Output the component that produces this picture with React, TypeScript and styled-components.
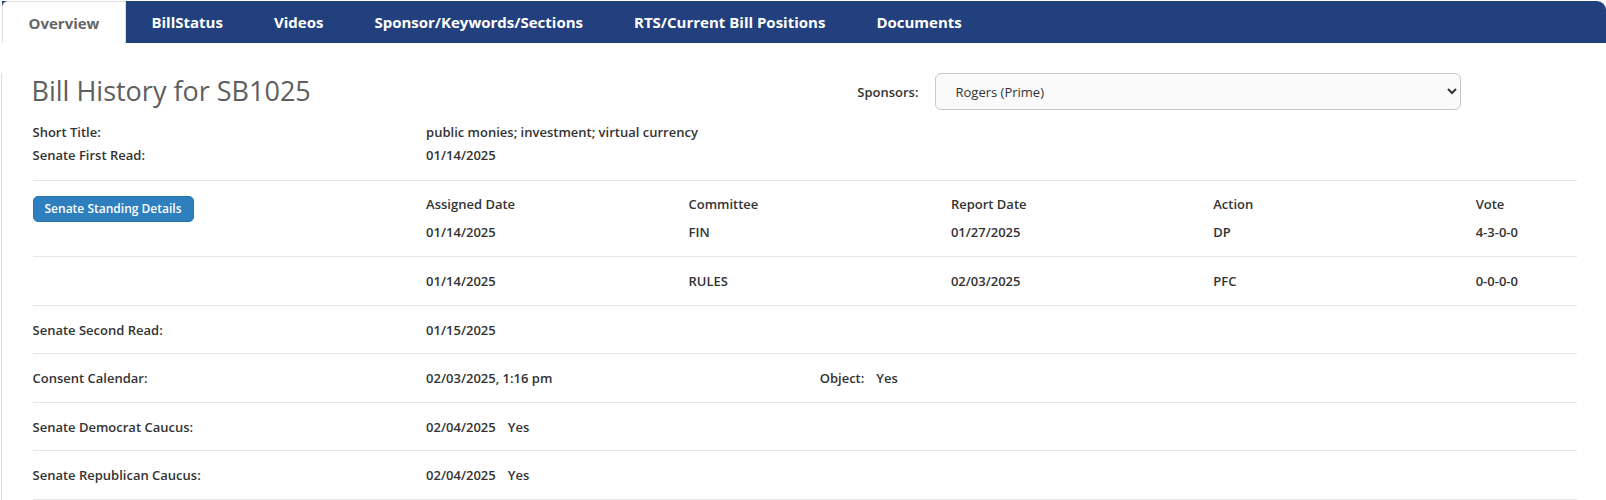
import React from "react";
import styled, { createGlobalStyle } from "styled-components";

const Global = createGlobalStyle`
  html, body { margin: 0; padding: 0; background: #fff; }
  body { font-family: "Open Sans", "Liberation Sans", sans-serif; color: #333; }
  * { box-sizing: border-box; }
`;

const Page = styled.div`
  width: 1606px;
  padding-top: 1px;
`;

const TabBar = styled.nav`
  display: flex;
  align-items: stretch;
  margin-left: 2px;
  height: 42px;
  background: #22407e;
  border-top-right-radius: 9px;
`;

const Tab = styled.a<{ $active?: boolean }>`
  display: flex;
  align-items: center;
  padding: 0 ${(p) => (p.$active ? "25.5px" : "25.5px")};
  font-size: 15px;
  font-weight: 700;
  text-decoration: none;
  color: ${(p) => (p.$active ? "#666" : "#fff")};
  background: ${(p) => (p.$active ? "#fff" : "transparent")};
  border: ${(p) => (p.$active ? "1px solid #ddd" : "none")};
  border-bottom: none;
  border-top-left-radius: ${(p) => (p.$active ? "6px" : "0")};
  cursor: pointer;
`;

const Panel = styled.div`
  border-left: 1px solid #ddd;
  margin-left: 1px;
  width: 1576px;
  padding-left: 30.5px;
`;

const Header = styled.div`
  display: grid;
  grid-template-columns: 802px 100px 526px;
  align-items: center;
  margin-top: 30px;
  height: 37px;
`;

const Title = styled.h1`
  margin: 0;
  font-size: 27px;
  font-weight: 400;
  color: #5e5e5e;
  line-height: 37px;
  position: relative;
  top: -1px;
  left: -1px;
`;

const SponsorLabel = styled.label`
  font-size: 13px;
  font-weight: 600;
  text-align: right;
  padding-right: 16px;
`;

const Select = styled.select`
  height: 37px;
  width: 526px;
  border: 1px solid #c8c8c8;
  border-radius: 6px;
  background: #fafafa;
  font-family: "Open Sans", "Liberation Sans", sans-serif;
  font-size: 13px;
  font-weight: 400;
  color: #333;
  padding: 0 6px 0 16px;
`;

const InfoBlock = styled.div`
  margin-top: 10.5px;
  padding-bottom: 12.8px;
  border-bottom: 1px solid #e6e6e6;
`;

const InfoLine = styled.div`
  display: grid;
  grid-template-columns: 393.6px 1fr;
  font-size: 13px;
  font-weight: 600;
  line-height: 23.6px;
`;

const Standing = styled.div`
  display: grid;
  grid-template-columns: 393.6px 1fr;
  border-bottom: 1px solid #e6e6e6;
`;

const ButtonCell = styled.div`
  padding-top: 14.4px;
`;

const DetailButton = styled.button`
  height: 26px;
  width: 161px;
  border: 1px solid #2a74ad;
  border-radius: 5px;
  background: #2e7fbe;
  color: #fff;
  font-family: "Open Sans", "Liberation Sans", sans-serif;
  font-size: 12px;
  font-weight: 600;
  padding: 0;
  cursor: pointer;
`;

const CommitteeGrid = styled.div<{ $pad: string }>`
  display: grid;
  grid-template-columns: repeat(4, 262.4px) 1fr;
  row-gap: 7.7px;
  padding: ${(p) => p.$pad};
  font-size: 13px;
  font-weight: 600;
  line-height: 20px;
`;

const Row = styled.div`
  display: grid;
  grid-template-columns: 393.6px 393.6px 1fr;
  align-items: center;
  height: 48.5px;
  border-bottom: 1px solid #e6e6e6;
  font-size: 13px;
  font-weight: 600;
`;

const Extra = styled.span`
  margin-left: 12px;
`;

const ObjectLabel = styled.span`
  margin-right: 12px;
`;

const tabs = [
  "Overview",
  "BillStatus",
  "Videos",
  "Sponsor/Keywords/Sections",
  "RTS/Current Bill Positions",
  "Documents",
];

export default function App() {
  return (
    <>
      <Global />
      <Page>
        <TabBar>
          {tabs.map((t, i) => (
            <Tab key={t} $active={i === 0}>
              {t}
            </Tab>
          ))}
        </TabBar>
        <Panel>
          <Header>
            <Title>Bill History for SB1025</Title>
            <SponsorLabel>Sponsors:</SponsorLabel>
            <Select defaultValue="rogers">
              <option value="rogers">Rogers (Prime)</option>
            </Select>
          </Header>
          <InfoBlock>
            <InfoLine>
              <span>Short Title:</span>
              <span>public monies; investment; virtual currency</span>
            </InfoLine>
            <InfoLine>
              <span>Senate First Read:</span>
              <span>01/14/2025</span>
            </InfoLine>
          </InfoBlock>
          <Standing>
            <ButtonCell>
              <DetailButton>Senate Standing Details</DetailButton>
            </ButtonCell>
            <CommitteeGrid $pad="12.6px 0 14.6px">
              <span>Assigned Date</span>
              <span>Committee</span>
              <span>Report Date</span>
              <span>Action</span>
              <span>Vote</span>
              <span>01/14/2025</span>
              <span>FIN</span>
              <span>01/27/2025</span>
              <span>DP</span>
              <span>4-3-0-0</span>
            </CommitteeGrid>
          </Standing>
          <Standing>
            <span />
            <CommitteeGrid $pad="13.8px 0 13.8px">
              <span>01/14/2025</span>
              <span>RULES</span>
              <span>02/03/2025</span>
              <span>PFC</span>
              <span>0-0-0-0</span>
            </CommitteeGrid>
          </Standing>
          <Row>
            <span>Senate Second Read:</span>
            <span>01/15/2025</span>
            <span />
          </Row>
          <Row>
            <span>Consent Calendar:</span>
            <span>02/03/2025, 1:16 pm</span>
            <span>
              <ObjectLabel>Object:</ObjectLabel>Yes
            </span>
          </Row>
          <Row>
            <span>Senate Democrat Caucus:</span>
            <span>
              02/04/2025<Extra>Yes</Extra>
            </span>
            <span />
          </Row>
          <Row>
            <span>Senate Republican Caucus:</span>
            <span>
              02/04/2025<Extra>Yes</Extra>
            </span>
            <span />
          </Row>
        </Panel>
      </Page>
    </>
  );
}
